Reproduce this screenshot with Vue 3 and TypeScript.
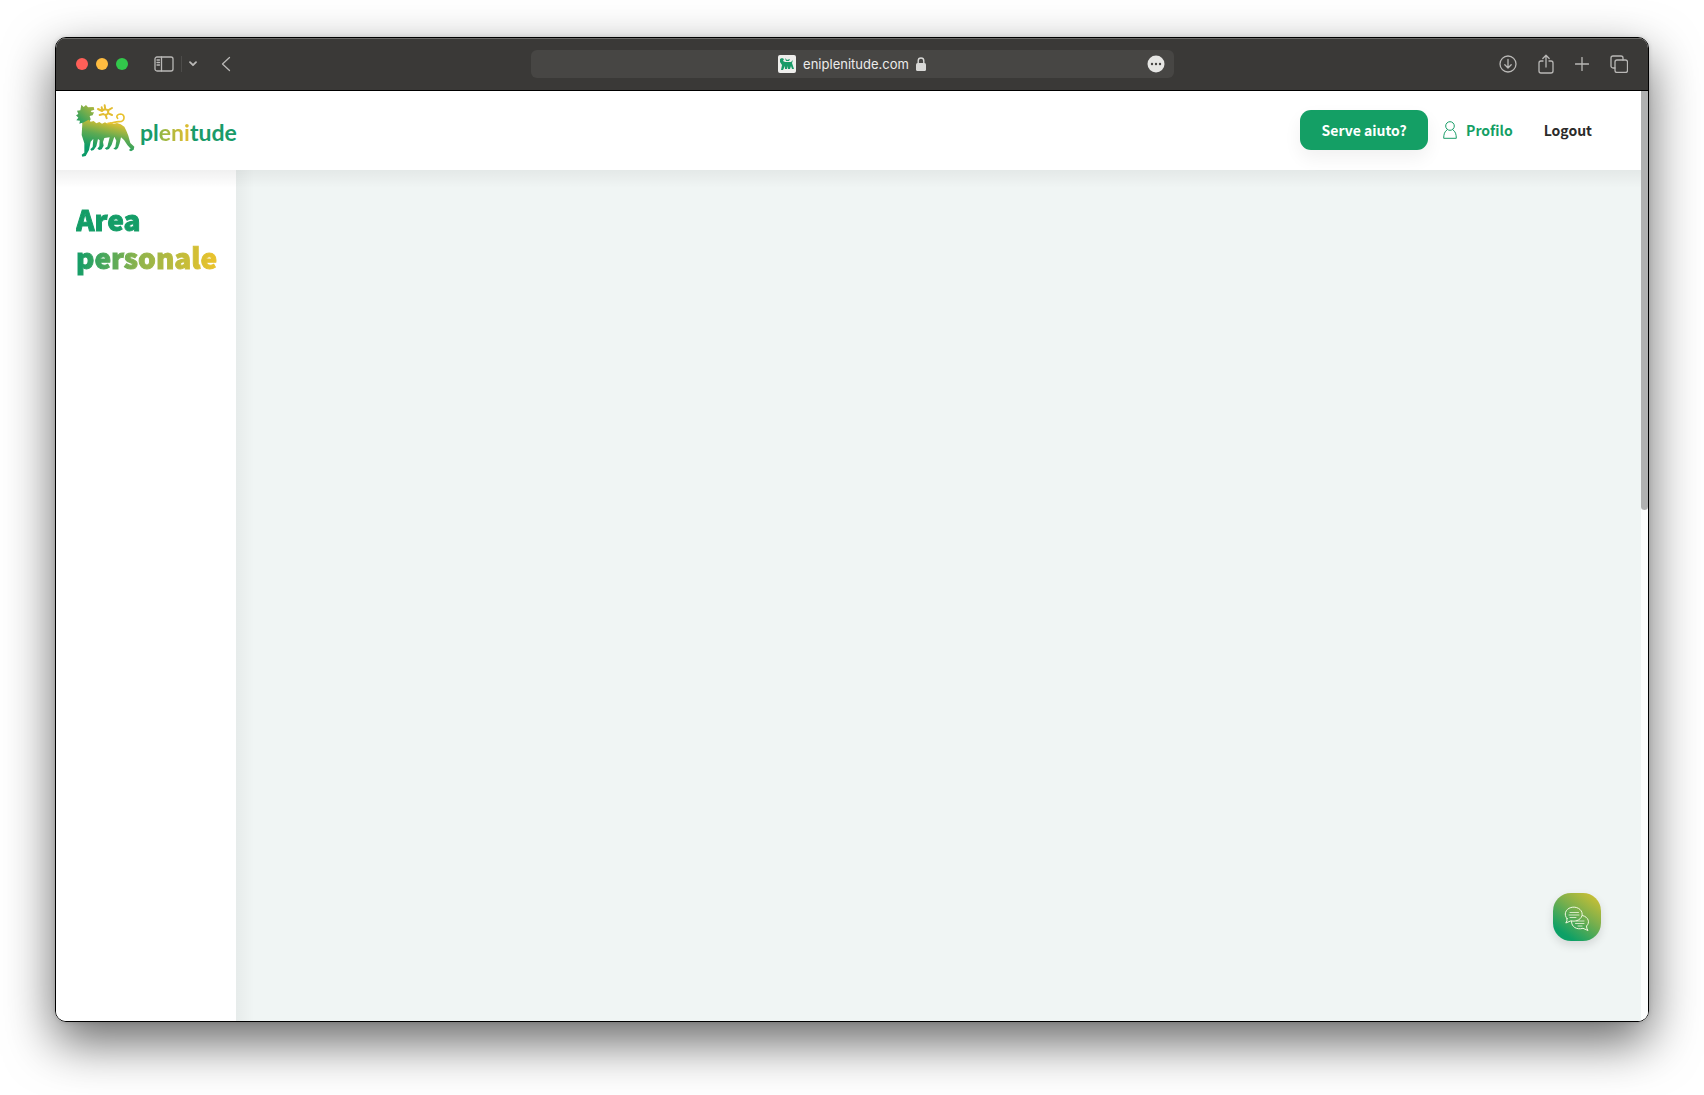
<script setup lang="ts">
import { ref } from 'vue'

const address = ref<string>('eniplenitude.com')
const lights: string[] = ['red', 'amber', 'green']
</script>

<template>
  <div class="desktop">
    <div class="window">
      <div class="toolbar">
        <div class="side">
          <span v-for="c in lights" :key="c" class="light" :class="c"></span>
          <button class="icon panel" aria-label="Sidebar">
            <svg width="20" height="16" viewBox="0 0 20 16">
              <rect x="1" y="1" width="18" height="14" rx="2" />
              <path d="M7.500 1V15M3 4H5.500M3 6.500H5.500M3 9H5.500" />
            </svg>
          </button>
          <span class="divider"></span>
          <button class="icon more" aria-label="Tab groups">
            <svg width="8" height="6" viewBox="0 0 8 6"><path class="bold" d="M1 1.200L4 4.200L7 1.200" /></svg>
          </button>
          <button class="icon back" aria-label="Back">
            <svg width="10" height="16" viewBox="0 0 10 16"><path d="M8.500 1.500L1.500 8L8.500 14.500" /></svg>
          </button>
        </div>
        <div class="address">
          <svg class="favicon" width="18" height="18" viewBox="0 0 18 18">
            <rect width="18" height="18" rx="2" fill="#eeeeec" />
            <path fill="#199b68" d="M2 4L4 3L6 4L5 6L7 7H13L15 5L14 8L16 14H14L13 11L12 14H10V11L9 14H7V11L5 15H3L4 10L2 7Z" />
            <path fill="#199b68" d="M7 3L9 5L12 4L11 6H8Z" />
          </svg>
          <span>{{ address }}</span>
          <svg class="lock" width="10" height="14" viewBox="0 0 10 14">
            <rect y="6" width="10" height="8" rx="1.500" fill="#d8d8d6" />
            <path d="M2.200 6V3.800A2.800 2.800 0 0 1 7.800 3.800V6" stroke="#d8d8d6" stroke-width="1.400" fill="none" />
          </svg>
          <button class="page-menu" aria-label="Page menu">
            <svg width="18" height="18" viewBox="0 0 18 18">
              <circle cx="9" cy="9" r="8.500" fill="#e6e6e4" />
              <g fill="#454442"><circle cx="5" cy="9" r="1.200" /><circle cx="9" cy="9" r="1.200" /><circle cx="13" cy="9" r="1.200" /></g>
            </svg>
          </button>
        </div>
        <div class="side tools">
          <button class="icon" aria-label="Downloads">
            <svg width="18" height="18" viewBox="0 0 18 18"><circle cx="9" cy="9" r="8" /><path d="M9 4.500V13M5.800 9.800L9 13L12.200 9.800" /></svg>
          </button>
          <button class="icon" aria-label="Share">
            <svg width="16" height="20" viewBox="0 0 16 20"><path d="M5 7H3A2 2 0 0 0 1 9V17A2 2 0 0 0 3 19H13A2 2 0 0 0 15 17V9A2 2 0 0 0 13 7H11M8 13V1.500M4.800 4.500L8 1.300L11.200 4.500" /></svg>
          </button>
          <button class="icon" aria-label="New tab">
            <svg width="14" height="14" viewBox="0 0 14 14"><path d="M7 0.500V13.500M0.500 7H13.500" /></svg>
          </button>
          <button class="icon" aria-label="Tab overview">
            <svg width="18" height="18" viewBox="0 0 18 18"><rect x="5" y="5" width="12.500" height="12.500" rx="2" /><path d="M5 13H3A2 2 0 0 1 1 11V3A2 2 0 0 1 3 1H11A2 2 0 0 1 13 3V5" /></svg>
          </button>
        </div>
      </div>

      <div class="viewport">
        <div class="page">
          <header class="header">
            <a class="brand" href="#" aria-label="plenitude">
              <svg width="60" height="53" viewBox="12 10 180 159">
                <defs>
                  <linearGradient id="coat" gradientUnits="userSpaceOnUse" x1="118" y1="40" x2="92" y2="150">
                    <stop offset="0" stop-color="#ecc22b" />
                    <stop offset=".25" stop-color="#d2bd34" />
                    <stop offset=".6" stop-color="#5daa52" />
                    <stop offset="1" stop-color="#0b9b68" />
                  </linearGradient>
                  <linearGradient id="mane" gradientUnits="userSpaceOnUse" x1="64" y1="14" x2="22" y2="66">
                    <stop offset="0" stop-color="#b5b83c" />
                    <stop offset="1" stop-color="#259f60" />
                  </linearGradient>
                </defs>
                <path fill="url(#mane)" d="M28 12L35 19L42 13L48 20L65 19L67 27L56 31L59 35L66 35L62 44L53 46L56 56L50 68L34 72L31 66L22 69L24 60L13 59L19 51L12 44L19 40L15 30L25 29Z" />
                <path fill="url(#coat)" d="M31 67L50 57L56 63L65 61L73 68L82 64L90 69L99 65L107 69L116 65L124 70L135 67L146 71L157 78L163 90L169 105L175 127L187 138L185 147L177 152L170 148L176 144L166 133L156 118L147 110L143 128L138 142L132 147L124 144L130 139L133 120L127 108L119 132L111 145L104 147L98 143L106 138L113 110L97 112L93 124L95 135L89 146L82 148L76 144L82 137L83 119L78 115L73 137L65 148L58 150L55 146L62 139L64 114L56 123L51 148L41 166L31 168L29 162L37 156L37 128L29 103Z" />
                <path d="M108 68C122 69 132 61 142 63C160 63 160 41 146 40C136 40 131 48 137 53" fill="none" stroke="#e8c22e" stroke-width="5" stroke-linecap="round" />
                <path fill="none" stroke="#e2bd32" stroke-width="6" stroke-linecap="round" stroke-linejoin="round" d="M78 25L90 31Q96 24 104 27Q112 32 107 39Q101 46 94 40L83 43M91 30L89 20M100 26L98 14M107 30L120 22M109 38L120 43M101 43L104 53" />
              </svg>
              <span class="wordmark">pl<span class="eni">eni</span>tude</span>
            </a>
            <nav class="nav">
              <button class="help">Serve aiuto?</button>
              <a class="profile" href="#">
                <svg width="14" height="18" viewBox="0 0 14 18" fill="none" stroke="#199d68"><circle cx="7" cy="5" r="4.300" /><path d="M4.300 8.700C1.500 10.400 0.700 13.500 0.700 17.300H13.300C13.300 13.500 12.500 10.400 9.700 8.700" /></svg>
                Profilo
              </a>
              <a class="logout" href="#">Logout</a>
            </nav>
          </header>
          <div class="body">
            <aside class="sidebar">
              <h1><span class="title">Area<br />personale</span></h1>
            </aside>
            <main class="content"></main>
          </div>
        </div>
        <div class="scrollbar"><div class="thumb"></div></div>
        <button class="chat" aria-label="Chat">
          <svg width="26" height="26" viewBox="0 0 26 26" fill="none" stroke="#f2f8df" stroke-linejoin="round" stroke-linecap="round">
            <path d="M3 12.500A8.500 7 0 1 1 7 14.800L1.800 17Q3.500 15 3 12.500Z" />
            <path d="M18.500 9.500C25 11 26 17 22.500 20Q22.500 22.500 24 24.500L19 22.300C12.500 24 7.500 21 7.500 15.500" />
            <path d="M6 6.500H14.500M5 9H15M6 11.500H12M12.500 15H20M11.500 17.500H20M14 20H18" stroke-width=".8" />
          </svg>
        </button>
      </div>
    </div>
  </div>
</template>

<style>
body {
  margin: 0;
  background: #fff;
}
</style>

<style scoped>
* {
  box-sizing: border-box;
}
button {
  padding: 0;
  border: 0;
  background: none;
  font: inherit;
}
a {
  text-decoration: none;
}
svg {
  display: block;
}
.desktop {
  height: 100vh;
  padding: 37px 55px 73px;
  overflow: hidden;
}
.window {
  display: flex;
  flex-direction: column;
  height: 100%;
  border: 1px solid #000;
  border-radius: 11px;
  overflow: hidden;
  box-shadow: 0 20px 50px rgba(0, 0, 0, .6), 0 0 4px rgba(0, 0, 0, .15);
}
.toolbar {
  display: flex;
  align-items: center;
  height: 53px;
  flex: none;
  background: #3a3937;
  border-bottom: 1px solid #000;
  box-shadow: inset 0 1px #6b6a68;
}
.side {
  display: flex;
  align-items: center;
  flex: 1;
  padding: 0 20px;
}
.light {
  width: 12px;
  height: 12px;
  margin-right: 8px;
  border-radius: 50%;
}
.red { background: #fe5f58; }
.amber { background: #febc40; }
.green { background: #32c84b; }
.icon svg {
  fill: none;
  stroke: #b9b8b6;
  stroke-width: 1.300;
  stroke-linecap: round;
  stroke-linejoin: round;
}
.icon .bold {
  stroke-width: 1.800;
}
.panel {
  margin-left: 18px;
}
.divider {
  width: 1px;
  height: 16px;
  margin: 0 7px;
  background: #4d4c4a;
}
.back {
  margin-left: 24px;
}
.address {
  position: relative;
  display: flex;
  align-items: center;
  justify-content: center;
  gap: 7px;
  width: 643px;
  height: 28px;
  border-radius: 6px;
  background: #474644;
  color: #ececea;
  font: 400 13px/18px Inter, sans-serif;
}
.page-menu {
  position: absolute;
  right: 9px;
  top: 5px;
}
.tools {
  justify-content: flex-end;
  gap: 21px;
}
.viewport {
  position: relative;
  display: flex;
  flex: 1;
  min-height: 0;
  background: #fff;
  font-family: "Noto Sans CJK SC", sans-serif;
}
.page {
  display: flex;
  flex-direction: column;
  flex: 1;
}
.header {
  position: relative;
  display: flex;
  align-items: center;
  justify-content: space-between;
  height: 79px;
  padding: 0 49px 1px 20px;
  background: #fff;
}
.brand {
  display: flex;
  align-items: center;
  gap: 4px;
}
.wordmark {
  padding-top: 3px;
  color: #199b6a;
  font: 700 23px/28px Lato, sans-serif;
}
.eni {
  background: linear-gradient(90deg, #8fb647, #e3bd30);
  background-clip: text;
  color: transparent;
}
.nav {
  display: flex;
  align-items: center;
  font-size: 14px;
  font-weight: 700;
  line-height: 20px;
}
.help {
  width: 128px;
  height: 40px;
  border-radius: 11px;
  background: #149f65;
  color: #fff;
  box-shadow: 0 8px 18px rgba(0, 0, 0, .06);
}
.profile {
  display: flex;
  align-items: center;
  gap: 9px;
  margin: 0 31px 0 15px;
  color: #149f65;
}
.logout {
  color: #2b2b2b;
}
.body {
  display: flex;
  flex: 1;
}
.sidebar {
  width: 180px;
  padding: 30px 20px;
  background: linear-gradient(rgba(0, 0, 0, .06), transparent 18px) no-repeat;
}
h1 {
  width: max-content;
  margin: 0;
  font-size: 28px;
  font-weight: 900;
  line-height: 38px;
}
.title {
  background: linear-gradient(90deg, #149d67 32%, #8fb44c 62%, #e8c22d 98%);
  background-clip: text;
  color: transparent;
  -webkit-text-stroke: 1px transparent;
}
.content {
  flex: 1;
  background: linear-gradient(rgba(0, 0, 0, .05), transparent 18px), linear-gradient(90deg, rgba(0, 0, 0, .04), transparent 18px), #f0f5f4;
}
.scrollbar {
  width: 7px;
  background: #fcfdfd;
}
.thumb {
  height: 45%;
  border-radius: 0 0 4px 4px;
  background: #b0b1b1;
}
.chat {
  position: absolute;
  right: 47px;
  bottom: 80px;
  display: grid;
  place-items: center;
  width: 48px;
  height: 48px;
  padding-top: 3px;
  border-radius: 18px;
  background: linear-gradient(35deg, #0da066 18%, #7fb04b 60%, #dcc32f);
  box-shadow: 0 4px 10px rgba(0, 0, 0, .12);
}
</style>
